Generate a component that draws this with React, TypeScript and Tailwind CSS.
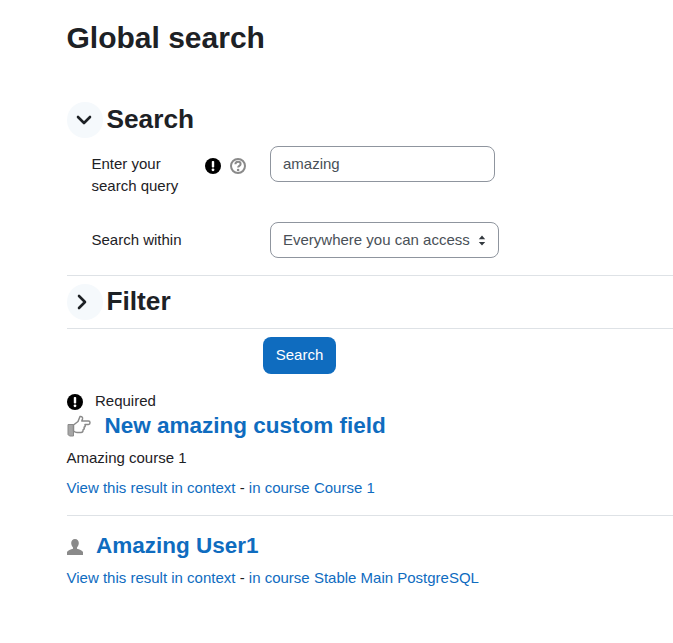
import { ChevronDown, ChevronRight } from "lucide-react";

function RequiredIcon({ className }: { className: string }) {
  return (
    <svg viewBox="0 0 16 16" className={className}>
      <circle cx="8" cy="8" r="8" fill="#000" />
      <rect x="6.8" y="3" width="2.4" height="6.6" rx="0.8" fill="#fff" />
      <circle cx="8" cy="11.8" r="1.4" fill="#fff" />
    </svg>
  );
}

function HelpIcon() {
  return (
    <svg viewBox="0 0 16 16" className="h-4 w-4">
      <circle cx="8" cy="8" r="7" fill="none" stroke="#8a8a8a" strokeWidth="2" />
      <path d="M5.4 6.200c0-1.500 1.100-2.500 2.600-2.500s2.600.9 2.600 2.300c0 1.800-2.500 1.800-2.500 3.400" fill="none" stroke="#8a8a8a" strokeWidth="2" />
      <circle cx="8.100" cy="12" r="1.300" fill="#8a8a8a" />
    </svg>
  );
}

function HandIcon() {
  return (
    <svg viewBox="0 0 24 22" className="h-[22px] w-6">
      <path d="M1 9.500h5.500V21H2.500L1 19.500z" fill="#a6a6a6" stroke="#8a8a8a" strokeWidth="1" />
      <path
        d="M6.500 10 11 6.500 13 1.500c1.700-.5 3 .8 2.500 2.500L14.800 6H21.500c2 0 2 3.400 0 3.400H18c.5 1.300 0 2.400-.9 2.800.4 1.300-.1 2.300-1.100 2.700.3 1.400-.5 2.600-2 2.600H10c-1.500 0-2.500-.6-3.500-1.300z"
        fill="#fff"
        stroke="#8a8a8a"
        strokeWidth="1.500"
        strokeLinejoin="round"
      />
    </svg>
  );
}

function UserIcon() {
  return (
    <svg viewBox="0 0 16 16" className="mt-[2px] h-4 w-4">
      <path d="M8 0c2.400 0 3.800 1.800 3.800 4.100 0 1.800-.8 3.400-1.800 4.300v1.300c2 .7 5.500 1.700 6 3.300V16H0v-3c.5-1.600 4-2.600 6-3.300V8.400C5 7.500 4.200 5.900 4.200 4.100 4.200 1.800 5.600 0 8 0z" fill="#8a8a8a" />
    </svg>
  );
}

function SectionHead({ open, title }: { open: boolean; title: string }) {
  return (
    <div className="flex items-center gap-1">
      <span className="flex h-9 w-9 items-center justify-center rounded-full bg-[#f5f9fc] text-[#1d2125]">
        {open ? (
          <ChevronDown size={24} strokeWidth={2.6} className="-ml-[2px]" />
        ) : (
          <ChevronRight size={24} strokeWidth={2.6} className="-ml-[5px]" />
        )}
      </span>
      <h3 className="-mt-[2px] text-[26.25px] font-bold leading-[36px] text-[#1d2125]">{title}</h3>
    </div>
  );
}

function ResultLinks({ course }: { course: string }) {
  return (
    <p className="text-[15px] leading-[22px] text-[#1d2125]">
      <a className="text-[#0f6cbf]">View this result in context</a> - <a className="text-[#0f6cbf]">in course {course}</a>
    </p>
  );
}

export default function App() {
  return (
    <div className="min-h-[643px] bg-white pl-[66.5px] font-['Liberation_Sans',Arial,sans-serif] text-[15px] text-[#1d2125]">
      <h2 className="pt-[20px] text-[30px] font-bold leading-[36px]">Global search</h2>

      <div className="mt-[46px]">
        <SectionHead open title="Search" />
        <div className="mt-[8px] flex pl-[25px]">
          <div className="w-[178.5px] pt-[7px]">
            <div className="flex">
              <span className="w-[113px] leading-[22px]">Enter your search query</span>
              <span className="flex h-[26px] items-center gap-[9px]">
                <RequiredIcon className="h-4 w-4" />
                <HelpIcon />
              </span>
            </div>
          </div>
          <div className="flex h-9 w-[225px] items-center rounded-lg border border-[#8f959e] px-3 text-[#495057]">amazing</div>
        </div>
        <div className="mt-[25px] flex items-center pl-[25px]">
          <span className="w-[178.5px]">Search within</span>
          <div className="flex h-9 w-[229px] items-center justify-between rounded-lg border border-[#8f959e] pl-3 pr-[12px] text-[#495057]">
            <span>Everywhere you can access</span>
            <svg viewBox="0 0 8 12" className="h-[11px] w-2">
              <path d="M4 0.500 7.500 4.500H.5zM4 11.500.5 7.500h7z" fill="#343a40" />
            </svg>
          </div>
        </div>
      </div>

      <div className="mt-[17px] border-t border-[#dee2e6] pt-[8px] pb-[8px]">
        <SectionHead open={false} title="Filter" />
      </div>

      <div className="border-t border-[#dee2e6] pt-[8px]">
        <button className="ml-[196.5px] block h-[37px] w-[73px] rounded-lg bg-[#0f6cbf] text-[15px] text-white">Search</button>
      </div>

      <div className="mt-[18px] flex h-[19px] items-center gap-[12.5px]">
        <RequiredIcon className="h-4 w-4" />
        <span>Required</span>
      </div>

      <div className="flex h-[30px] items-center gap-[14px]">
        <HandIcon />
        <h3 className="text-[22.5px] font-bold text-[#0f6cbf]">New amazing custom field</h3>
      </div>
      <p className="mt-[6px] leading-[22px]">Amazing course 1</p>
      <div className="mt-[8px]">
        <ResultLinks course="Course 1" />
      </div>

      <div className="mt-[16px] border-t border-[#dee2e6] pt-[15px]">
        <div className="flex h-[30px] items-center gap-[13.500px]">
          <UserIcon />
          <h3 className="text-[22.5px] font-bold text-[#0f6cbf]">Amazing User1</h3>
        </div>
        <div className="mt-[6px]">
          <ResultLinks course="Stable Main PostgreSQL" />
        </div>
      </div>
    </div>
  );
}
